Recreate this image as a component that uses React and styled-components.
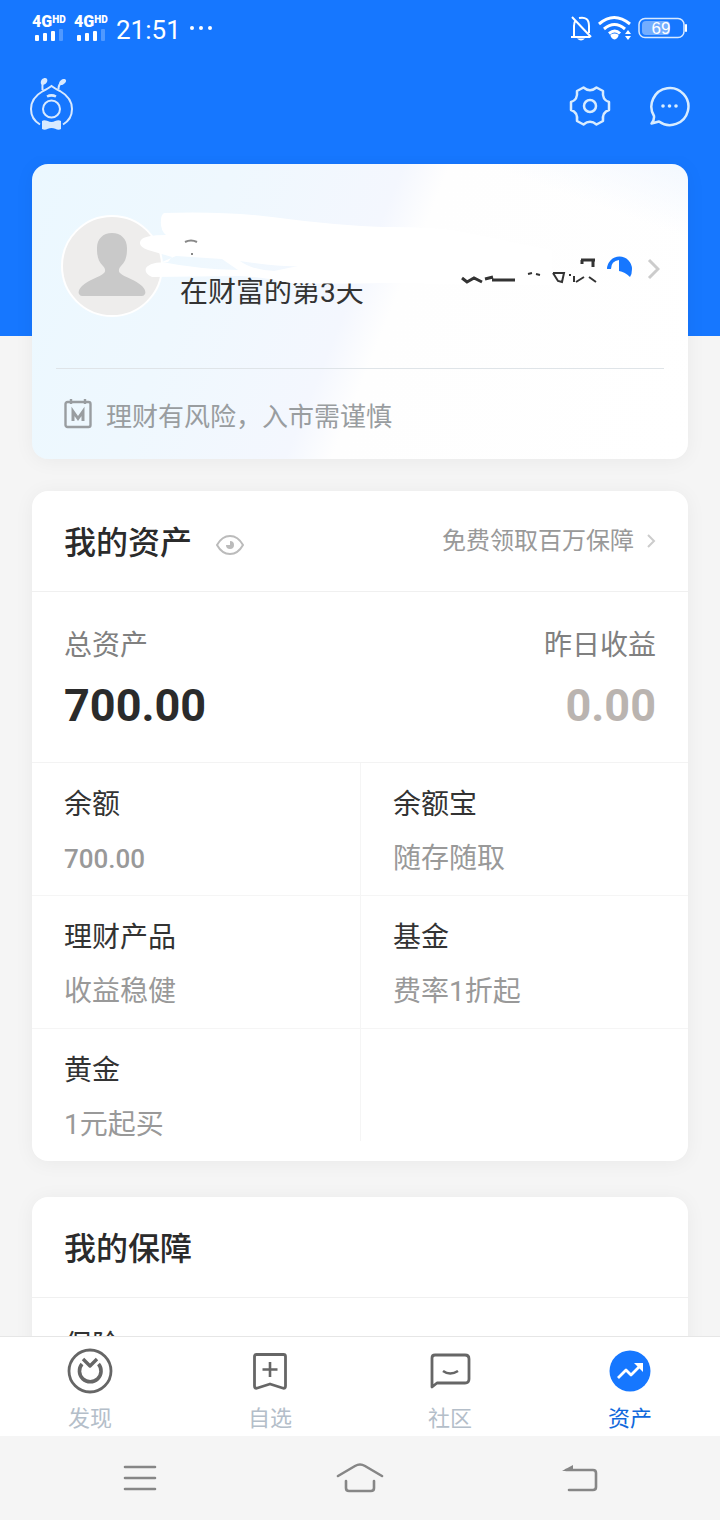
import React from "react";
import styled, { createGlobalStyle, css } from "styled-components";

const GlobalStyle = createGlobalStyle`
  * { box-sizing: border-box; }
  body {
    margin: 0;
    background: #f5f5f5;
    font-family: Roboto, "Noto Sans CJK SC", sans-serif;
    color: #333;
  }
  h2, h3, p, dl, dt, dd { margin: 0; font-weight: 400; }
  svg { display: block; flex: none; }
`;

const plainButton = css`
  border: 0;
  padding: 0;
  background: none;
  font: inherit;
  color: inherit;
  cursor: pointer;
`;

const Screen = styled.div`
  display: flex;
  flex-direction: column;
  height: 100vh;
  background: linear-gradient(#1677ff 336px, #f5f5f5 336px);
`;

const StatusBar = styled.div`
  display: flex;
  align-items: center;
  justify-content: space-between;
  flex: none;
  height: 56px;
  padding: 0 32px;
  color: #fff;
`;

const StatusGroup = styled.div`
  display: flex;
  align-items: center;
  gap: ${(p) => p.$gap}px;
`;

const Signal = styled.div`
  width: 34px;
`;

const Network = styled.div`
  display: flex;
  align-items: flex-start;
  height: 14px;
  font-size: 16px;
  font-weight: 900;
  line-height: 14px;
`;

const Hd = styled.span`
  font-size: 10px;
  line-height: 10px;
`;

const Clock = styled.time`
  font-size: 26px;
  line-height: 32px;
  padding-top: 4px;
`;

const AppBar = styled.header`
  display: flex;
  align-items: center;
  justify-content: space-between;
  flex: none;
  height: 100px;
  padding: 0 28px;
`;

const BarActions = styled.div`
  display: flex;
  gap: 36px;
`;

const IconButton = styled.button`
  ${plainButton}
`;

const Content = styled.main`
  flex: 1;
  min-height: 0;
  overflow-y: auto;
  scrollbar-width: none;
  padding: 8px 32px 0;
`;

const Card = styled.section`
  position: relative;
  border-radius: 16px;
  background: #fff;
  box-shadow: 0 2px 20px rgba(0, 0, 0, 0.05);
  margin-bottom: ${(p) => p.$after || 0}px;
`;

const ProfileCard = styled(Card)`
  padding: 0 24px;
  background:
    linear-gradient(200deg, #f3f8ff 0%, rgba(255, 255, 255, 0) 14%),
    linear-gradient(112deg, #ebf8ff 0%, #eff8fe 26%, #f4f7fe 48%, #fefefe 54%, #fff 100%);
`;

const Profile = styled.div`
  display: flex;
  align-items: center;
  height: 205px;
  padding: 0 4px;
  border-bottom: 1px solid #dfe4e8;
`;

const Days = styled.p`
  flex: 1;
  margin: 54px 0 0 16px;
  font-size: 28px;
  line-height: 40px;
`;

const PointsLink = styled.a`
  display: flex;
  align-items: center;
  gap: 14px;
  padding-top: 6px;
`;

const Scribble = styled.svg`
  position: absolute;
  left: 0;
  top: 0;
  pointer-events: none;
`;

const Notice = styled.p`
  display: flex;
  align-items: center;
  gap: 14px;
  height: 90px;
  padding: 0 8px;
  font-size: 26px;
  color: #999da0;
`;

const CardHead = styled.div`
  display: flex;
  align-items: center;
  height: 101px;
  padding: 0 32px;
  border-bottom: 1px solid #f0f0f0;
`;

const Title = styled.h2`
  padding-top: 4px;
  font-size: 32px;
  line-height: 48px;
  font-weight: 500;
  color: #2b2b2b;
`;

const EyeButton = styled(IconButton)`
  margin: 8px auto 0 24px;
`;

const MoreLink = styled.a`
  display: flex;
  align-items: center;
  gap: 12px;
  font-size: 24px;
  line-height: 32px;
  color: #999;
  text-decoration: none;
`;

const Totals = styled.dl`
  display: flex;
  justify-content: space-between;
  height: 171px;
  padding: 34px 32px 0;
  border-bottom: 1px solid #f3f3f3;
`;

const Total = styled.div`
  text-align: ${(p) => p.$align || "left"};
`;

const TotalLabel = styled.dt`
  font-size: 28px;
  line-height: 40px;
  color: #808080;
`;

const TotalValue = styled.dd`
  margin-top: 12px;
  font-size: 45px;
  line-height: 56px;
  font-weight: 700;
  color: ${(p) => (p.$muted ? "#bab4b0" : "#2b2b2b")};
`;

const Products = styled.div`
  display: grid;
  grid-template-columns: 1fr 1fr;
  padding-bottom: 20px;
`;

const Product = styled.div`
  height: ${(p) => (p.$last ? 112 : 133)}px;
  padding: 22px 32px 0;
  border-left: ${(p) => (p.$right ? "1px solid #f5f5f5" : "0")};
  border-bottom: ${(p) => (p.$last ? "0" : "1px solid #f5f5f5")};
`;

const Insurance = styled.div`
  padding: 28px 32px;
`;

const ProductName = styled.h3`
  font-size: 28px;
  line-height: 40px;
`;

const ProductNote = styled.p`
  margin-top: 14px;
  font-size: ${(p) => (p.$amount ? 26 : 28)}px;
  line-height: 40px;
  font-weight: ${(p) => (p.$amount ? 500 : 400)};
  color: #999;
`;

const TabBar = styled.nav`
  display: grid;
  grid-template-columns: repeat(4, 1fr);
  flex: none;
  height: 100px;
  background: #fff;
  border-top: 1px solid #e6e6e6;
`;

const Tab = styled.a`
  display: flex;
  flex-direction: column;
  align-items: center;
  gap: 10px;
  padding-top: 10px;
  font-size: 22px;
  line-height: 28px;
  text-decoration: none;
  color: ${(p) => (p.$active ? "#1068dc" : "#b4bec9")};
`;

const SystemBar = styled.div`
  display: grid;
  grid-template-columns: repeat(3, 220px);
  justify-content: center;
  justify-items: center;
  align-items: center;
  flex: none;
  height: 84px;
  background: #f5f5f5;
`;

const SignalIndicator = () => (
  <Signal>
    <Network>4G<Hd>HD</Hd></Network>
    <svg width="34" height="12" fill="#fff">
      <rect x="3" y="6" width="4" height="6" rx="1" />
      <rect x="11" y="4" width="4" height="8" rx="1" />
      <rect x="19" y="2" width="4" height="10" rx="1" />
      <rect x="27" y="0" width="4" height="12" rx="1" opacity=".25" />
    </svg>
  </Signal>
);

const Chevron = ({ size, width }) => (
  <svg width={size / 2 + 2} height={size} viewBox={`0 0 ${size / 2 + 2} ${size}`} fill="none" stroke="#ccc" strokeWidth={width}>
    <path d={`M2 2 L${size / 2} ${size / 2} L2 ${size - 2}`} />
  </svg>
);

const AntIcon = () => (
  <svg width="48" height="56" viewBox="0 0 48 56" fill="none" stroke="#d8e9ff" strokeWidth="2">
    <path d="M12 46.500C6 43 3 37 3 31c0-8 5-14 12-18 4-2 6-3 8.500-5C26 10 28 11 32 13c7 4 12 10 12 18 0 6-3 12-9 15.500" />
    <circle cx="23.500" cy="31" r="8.500" />
    <path d="M19 18.500c3-1.500 6-1.500 9 0" strokeWidth="2.500" />
    <path d="M14.500 12c0-4-.5-5 .5-7M30.500 11c0-3 1-5 3-6" />
    <path d="M13 6c-1-4 2-6 4-6s3 2 2 4-4 4-6 2ZM31 6c0-3 3-5 5-5s3 2 1 4-4 3-6 1Z" fill="#d8e9ff" stroke="none" />
    <path d="M14 43c3-2 6 1 9.500 1s6-3 9.500-1v8c-3 2-6-1-9.500-1s-6 3-9.500 1Z" fill="#d8e9ff" stroke="none" />
  </svg>
);

const GearIcon = () => (
  <svg width="44" height="44" viewBox="0 0 44 44" fill="none" stroke="#d8ecff" strokeWidth="2.500" strokeLinejoin="round">
    <path d="M15.500 3.500Q22 9 28.500 3.500L35 7q-1 9 6 11v8q-7 2-6 11l-6.500 3.500q-6.500-5.500-13 0L9 37q1-9-6-11v-8q7-2 6-11Z" />
    <circle cx="22" cy="22" r="6" />
  </svg>
);

const MessageIcon = () => (
  <svg width="44" height="44" viewBox="0 0 44 44" fill="none" stroke="#d8ecff" strokeWidth="2.500" strokeLinejoin="round">
    <path d="M6 32A18.500 18.500 0 1 1 11 37.500L3.500 39.500Q6.500 36 6 32Z" />
    <g fill="#d8ecff" stroke="none">
      <circle cx="15" cy="22" r="1.800" />
      <circle cx="21.500" cy="22" r="1.800" />
      <circle cx="28" cy="22" r="1.800" />
    </g>
  </svg>
);

const Avatar = () => (
  <svg width="104" height="104" viewBox="0 0 104 104" role="img" aria-label="头像">
    <circle cx="52" cy="52" r="50" fill="#eeedec" stroke="#fff" strokeWidth="2" />
    <path d="M52 19c9 0 15 6 15 15 0 8-1 13-6 18-2 2-3 5-1 7 4 4 16 7 22 13 3 3 4 6 3 8q-1 2-3 2H22q-2 0-3-2c-1-2 0-5 3-8 6-6 18-9 22-13 2-2 1-5-1-7-5-5-6-10-6-18 0-9 6-15 15-15Z" fill="#c9c9c9" />
  </svg>
);

const tabs = [
  {
    label: "发现",
    icon: (
      <>
        <circle cx="24" cy="24" r="21" strokeWidth="2.800" />
        <path d="M16 17A10.800 10.800 0 1 0 32.500 17" strokeWidth="3.600" />
        <path d="m17 12 7 7 7-7" strokeWidth="3.400" />
      </>
    ),
  },
  {
    label: "自选",
    icon: (
      <>
        <path d="M10.500 7.500h27q2 0 2 2V39q0 3-3 2L24 37l-12.500 4q-3 1-3-2V9.500q0-2 2-2Z" strokeWidth="2.800" />
        <path d="M24 15v15M16.500 22.500h15" strokeWidth="2.600" />
      </>
    ),
  },
  {
    label: "社区",
    icon: (
      <>
        <path d="M9 8h30q4 0 4 4v20q0 4-4 4H11l-5 4V11q0-3 3-3Z" strokeWidth="2.800" />
        <path d="M17 24q7 5 15 0" strokeWidth="2.600" />
      </>
    ),
  },
  {
    label: "资产",
    active: true,
    icon: (
      <>
        <circle cx="24" cy="24" r="20.500" fill="#1677ff" stroke="none" />
        <path d="m12 31 8-8 5 5 10-10" stroke="#fff" strokeWidth="2.800" />
        <path d="M28 16h9v9Z" fill="#fff" stroke="none" />
      </>
    ),
  },
];

const products = [
  { name: "余额", note: "700.00", amount: true },
  { name: "余额宝", note: "随存随取" },
  { name: "理财产品", note: "收益稳健" },
  { name: "基金", note: "费率1折起" },
  { name: "黄金", note: "1元起买" },
  null,
];

export default function App() {
  return (
    <Screen>
      <GlobalStyle />
      <StatusBar>
        <StatusGroup $gap={8}>
          <SignalIndicator />
          <SignalIndicator />
          <Clock>21:51</Clock>
          <svg width="24" height="6" fill="#fff">
            <circle cx="3" cy="3" r="2" />
            <circle cx="12" cy="3" r="2" />
            <circle cx="21" cy="3" r="2" />
          </svg>
        </StatusGroup>
        <StatusGroup $gap={6}>
          <svg width="22" height="26" viewBox="0 0 22 26" fill="none" stroke="#fff" strokeWidth="2">
            <path d="M4 21V11q0-4 2-6M9 3q10-2 10 8v7M1 22h19M2 2l19 20" />
            <path d="M7 23.500h8q-4 4-8 0Z" fill="#fff" stroke="none" />
          </svg>
          <svg width="34" height="26" viewBox="0 0 34 26" fill="none" stroke="#fff" strokeWidth="3">
            <path d="M1 9q15-13 31 0M6 14q10.500-9 21 0M11 18.500q6-5 11 0" />
            <path d="M16.500 18.500c3 0 4 1 4 2s-2 4-4 4-4-3-4-4 1-2 4-2Z" fill="#fff" stroke="none" />
            <path d="m27 19 3-4 3 4ZM27 21l3 4 3-4Z" fill="#fff" stroke="none" />
          </svg>
          <svg width="50" height="22" viewBox="0 0 50 22">
            <rect x="1" y="1.500" width="45" height="19" rx="6" fill="none" stroke="#d8e9ff" strokeWidth="1.500" />
            <rect x="4" y="4" width="28" height="14" rx="4" fill="#73adff" />
            <rect x="47" y="7" width="2" height="8" rx="1" fill="#fff" />
            <text x="23" y="17" textAnchor="middle" fill="#fff" fontSize="17" fontFamily="Liberation Sans, sans-serif">69</text>
          </svg>
        </StatusGroup>
      </StatusBar>

      <AppBar>
        <IconButton aria-label="蚂蚁财富"><AntIcon /></IconButton>
        <BarActions>
          <IconButton aria-label="设置"><GearIcon /></IconButton>
          <IconButton aria-label="消息"><MessageIcon /></IconButton>
        </BarActions>
      </AppBar>

      <Content>
        <ProfileCard $after={32}>
          <Profile>
            <Avatar />
            <Days>在财富的第3天</Days>
            <PointsLink href="#points" aria-label="查看">
              <svg width="26" height="26" viewBox="0 0 26 26">
                <path d="M0 13A12.500 12.500 0 0 1 25 13q0 5-2 8-5-5-11-6V4Q4 5 4 13Z" fill="#1677ff" />
              </svg>
              <Chevron size={22} width={3} />
            </PointsLink>
          </Profile>
          <Scribble width="600" height="140" viewBox="0 0 600 140" aria-hidden="true">
            <path
              fill="#fff"
              fillRule="evenodd"
              d="M132 49Q190 47 240 53Q300 61 350 63Q410 63 430 68L520 86V121L350 119Q310 120 258 119Q230 113 208 112L120 113Q112 109 114 104Q118 98 136 98L140 93L116 86Q105 82 109 76Q113 71 134 71Q128 66 129 56Q129 51 132 49ZM144 92L190 95L206 106Q165 105 130 98ZM208 97Q250 103 266 102L242 107Q220 106 208 97Z"
            />
            <path d="M153 78q6-3 12 0M159 90h2" fill="none" stroke="#888" strokeWidth="2" />
            <g fill="none" stroke="#333" strokeWidth="3">
              <path d="m430 114 5 4 7-4 8 4M453 115l8-2M460 116h23M530 98" />
              <path d="M496 110l4-1M504 110l4 1M521 109h11l-2 9-4-1-5-8M537 111h2M542 112v6M544 118l8-5M557 113l7 5" strokeWidth="2" />
              <path d="M549 96h14M550 96v4M561 96v7" />
            </g>
          </Scribble>
          <Notice>
            <svg width="28" height="30" viewBox="0 0 28 30" fill="none" stroke="#999da0" strokeWidth="2.400">
              <rect x="1.500" y="3" width="25" height="25" rx="2" />
              <path d="M7 0v5M21 0v5" />
              <path d="M9 22V12.500l5 7 5-7V22" strokeWidth="3" />
            </svg>
            理财有风险，入市需谨慎
          </Notice>
        </ProfileCard>

        <Card $after={36}>
          <CardHead>
            <Title>我的资产</Title>
            <EyeButton aria-label="隐藏金额">
              <svg width="28" height="20" viewBox="0 0 28 20" fill="none" stroke="#bbb" strokeWidth="2">
                <path d="M1 10Q6 1 14 1t13 9q-5 9-13 9T1 10Z" />
                <path d="M14 6v4h-4a4 4 0 1 0 4-4Z" fill="#bbb" stroke="none" />
              </svg>
            </EyeButton>
            <MoreLink href="#guarantee">
              免费领取百万保障
              <Chevron size={16} width={2} />
            </MoreLink>
          </CardHead>
          <Totals>
            <Total>
              <TotalLabel>总资产</TotalLabel>
              <TotalValue>700.00</TotalValue>
            </Total>
            <Total $align="right">
              <TotalLabel>昨日收益</TotalLabel>
              <TotalValue $muted>0.00</TotalValue>
            </Total>
          </Totals>
          <Products>
            {products.map((item, i) => (
              <Product key={i} $right={i % 2 === 1} $last={i > 3}>
                {item && (
                  <>
                    <ProductName>{item.name}</ProductName>
                    <ProductNote $amount={item.amount}>{item.note}</ProductNote>
                  </>
                )}
              </Product>
            ))}
          </Products>
        </Card>

        <Card>
          <CardHead>
            <Title>我的保障</Title>
          </CardHead>
          <Insurance>
            <ProductName>保险</ProductName>
          </Insurance>
        </Card>
      </Content>

      <TabBar>
        {tabs.map((tab) => (
          <Tab key={tab.label} href={`#${tab.label}`} $active={tab.active}>
            <svg width="48" height="48" viewBox="0 0 48 48" fill="none" stroke="#666" strokeLinejoin="round">
              {tab.icon}
            </svg>
            {tab.label}
          </Tab>
        ))}
      </TabBar>

      <SystemBar>
        <IconButton aria-label="菜单">
          <svg width="34" height="28" viewBox="0 0 34 28" stroke="#868686" strokeWidth="2.600" strokeLinecap="round">
            <path d="M2 3h30M2 14h30M2 25h30" />
          </svg>
        </IconButton>
        <IconButton aria-label="主页">
          <svg width="48" height="32" viewBox="0 0 48 32" fill="none" stroke="#868686" strokeWidth="2.600" strokeLinecap="round">
            <path d="M2 14 19 4q5-3 10 0l17 10M10 19v7q0 3 3 3h22q3 0 3-3v-7" />
          </svg>
        </IconButton>
        <IconButton aria-label="返回">
          <svg width="36" height="28" viewBox="0 0 36 28" fill="none" stroke="#868686" strokeWidth="2.600" strokeLinecap="round">
            <path d="M4 6h27q3 0 3 3v14q0 3-3 3H7" />
            <path d="m0 7 11-6v6Z" fill="#868686" stroke="none" />
          </svg>
        </IconButton>
      </SystemBar>
    </Screen>
  );
}
